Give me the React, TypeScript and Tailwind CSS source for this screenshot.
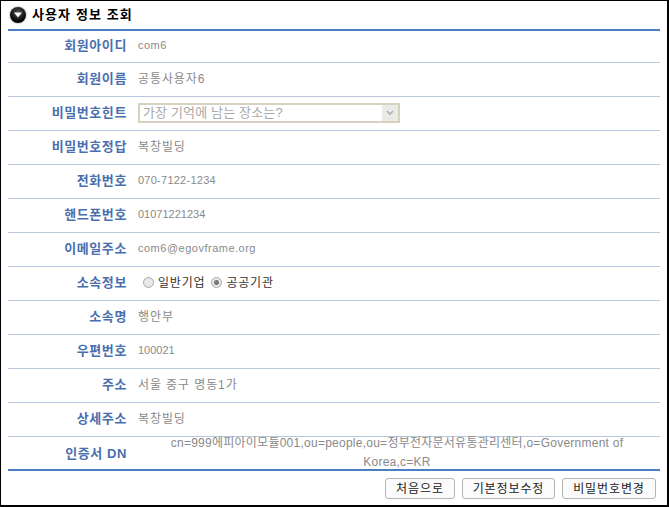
const KR = "font-['Liberation_Sans','Noto_Sans_CJK_KR',sans-serif]";

const HANGUL = "text-[12px] tracking-[0.9px]";
const LATIN = "text-[11px]";

type Row = { label: string; value: string; cls?: string };

const rowsTop: Row[] = [
  { label: "회원아이디", value: "com6", cls: "text-[11px] tracking-[0.5px]" },
  { label: "회원이름", value: "공통사용자6", cls: HANGUL },
];

const rowsMiddle: Row[] = [
  { label: "비밀번호정답", value: "복창빌딩", cls: HANGUL },
  { label: "전화번호", value: "070-7122-1234", cls: "text-[11px] tracking-[0.25px]" },
  { label: "핸드폰번호", value: "01071221234", cls: LATIN },
  { label: "이메일주소", value: "com6@egovframe.org", cls: "text-[11px] tracking-[0.5px]" },
];

const rowsBottom: Row[] = [
  { label: "소속명", value: "행안부", cls: HANGUL },
  { label: "우편번호", value: "100021", cls: LATIN },
  { label: "주소", value: "서울 중구 명동1가", cls: HANGUL },
  { label: "상세주소", value: "복창빌딩", cls: HANGUL },
];

const Line = ({ label, cls, children }: { label: string; cls?: string; children: React.ReactNode }) => (
  <div className="flex h-[34px] items-center border-b border-[#b7c8de]">
    <div className="w-[119px] pb-0.5 text-right text-[13px] font-bold tracking-[0.6px] text-[#4a6fae]">{label}</div>
    <div className={`${cls} ml-[11px] flex-1 pb-0.5 text-[#8a8a8a]`}>{children}</div>
  </div>
);

const Radio = ({ checked }: { checked?: boolean }) => (
  <span className="flex h-[11px] w-[11px] items-center justify-center rounded-full border border-[#a8a8a8] bg-[#e8e8e8]">
    {checked && <span className="h-[5px] w-[5px] rounded-full bg-[#777777]" />}
  </span>
);

const Btn = ({ children, w }: { children: string; w: string }) => (
  <button className={`${w} h-[21px] rounded-[3px] border border-[#b5b5b5] bg-[#fbfbfb] text-[12px] tracking-[0.9px] text-[#222222]`}>
    {children}
  </button>
);

export default function App() {
  return (
    <div className={`${KR} h-[507px] w-[669px] border-t border-l border-b-2 border-r-2 border-black bg-white px-[7px]`}>
      <div className="flex h-[28px] items-center pl-[2px]">
        <span className="flex h-[16px] w-[16px] items-center justify-center rounded-full bg-[radial-gradient(circle_at_50%_35%,#555555,#000000_70%)] shadow-[0_0_2px_#777777]">
          <svg width="8" height="6" viewBox="0 0 8 6">
            <path d="M0 0.5H8L4 5.5Z" fill="#ffffff" />
          </svg>
        </span>
        <span className="ml-[6px] text-[13px] font-bold tracking-[1.1px] text-black">사용자 정보 조회</span>
      </div>
      <div className="w-[652px] border-t-2 border-b-2 border-t-[#4a7fc1] border-b-[#4a7fc1]">
        <div className="[&>div:first-child]:h-[32px]">
          {rowsTop.map((r) => (
            <Line key={r.label} label={r.label} cls={r.cls}>{r.value}</Line>
          ))}
        </div>
        <Line label="비밀번호힌트">
          <div className="flex h-[20px] w-[262px] items-center justify-between border-2 border-[#d6d2bf] bg-white pl-[3px] text-[13px] tracking-[0.15px] text-[#a9a9a9]">
            <span>가장 기억에 남는 장소는?</span>
            <span className="flex h-[16px] w-[16px] items-center justify-center bg-[#e9ebe6]">
              <svg width="8" height="6" viewBox="0 0 8 6" fill="none">
                <path d="M1 1L4 4L7 1" stroke="#b0b0b0" strokeWidth="1.6" />
              </svg>
            </span>
          </div>
        </Line>
        {rowsMiddle.map((r) => (
          <Line key={r.label} label={r.label} cls={r.cls}>{r.value}</Line>
        ))}
        <Line label="소속정보">
          <div className="flex items-center pl-[5px] text-[12px] tracking-[0.8px] text-[#333333]">
            <Radio />
            <span className="ml-[4px]">일반기업</span>
            <span className="ml-[6px]"><Radio checked /></span>
            <span className="ml-[4px]">공공기관</span>
          </div>
        </Line>
        {rowsBottom.map((r) => (
          <Line key={r.label} label={r.label} cls={r.cls}>{r.value}</Line>
        ))}
        <div className="flex h-[32px] items-center">
          <div className="w-[119px] pt-[2px] text-right text-[13px] font-bold tracking-[0.6px] text-[#4a6fae]">인증서 DN</div>
          <div className="ml-[11px] w-[518px] px-[20px] text-center text-[12px] leading-[19px] tracking-[0.25px] text-[#8a8a8a]">
            cn=999에피아이모듈001,ou=people,ou=정부전자문서유통관리센터,o=Government of Korea,c=KR
          </div>
        </div>
      </div>
      <div className="mt-[7px] flex w-[648px] justify-end gap-[7px]">
        <Btn w="w-[70px]">처음으로</Btn>
        <Btn w="w-[93px]">기본정보수정</Btn>
        <Btn w="w-[94px]">비밀번호변경</Btn>
      </div>
    </div>
  );
}
